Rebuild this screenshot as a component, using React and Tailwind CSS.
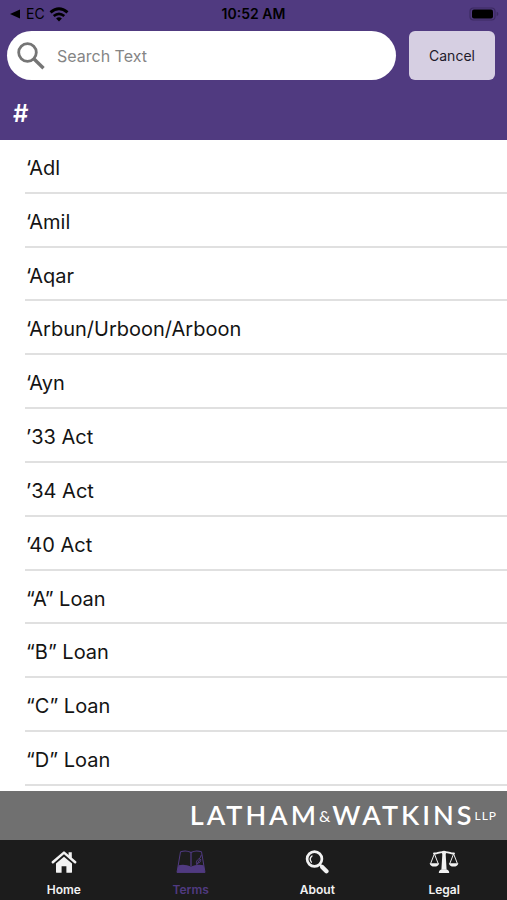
const TERMS = [
  "‘Adl",
  "‘Amil",
  "‘Aqar",
  "‘Arbun/Urboon/Arboon",
  "‘Ayn",
  "’33 Act",
  "’34 Act",
  "’40 Act",
  "“A” Loan",
  "“B” Loan",
  "“C” Loan",
  "“D” Loan",
];

const HomeIcon = () => (
  <svg viewBox="0 0 26 24" className="h-6 w-[26px]" fill="currentColor" aria-hidden="true">
    <path d="M5 13.600 13 6.700l8 6.900v8.300q0 .9-.9.9h-4.700v-6.600h-4.800v6.600H5.900q-.9 0-.9-.9z" />
    <path
      d="M1.800 12.200 13 2.600l11.200 9.600"
      fill="none"
      stroke="currentColor"
      strokeWidth="2.500"
      strokeLinecap="round"
      strokeLinejoin="round"
    />
    <path d="M17.600 2.200h3.200v6l-3.200-2.700z" />
  </svg>
);

const BookIcon = () => (
  <svg viewBox="0 0 30 24" className="h-6 w-[30px]" fill="none" stroke="currentColor" aria-hidden="true">
    <path d="M4.500 1.800 1 22.400h28L25.500 1.800" strokeWidth="1" />
    <path d="M4.500 1.800c3-1 7.500-1 10.500.6 3-1.600 7.500-1.600 10.500-.6" strokeWidth="1.100" />
    <path d="M15 2.400v13.600" strokeWidth="1.300" />
    <path d="M2.400 15.200q6.800-1.400 12.600 1.400 5.800-2.800 12.600-1.400L29 22.400H1z" fill="currentColor" stroke="none" />
    <path d="M21 14.800c-1.800-2.800.4-5.400 3-6.600l1.400-3.400M20.800 14.600l3.200-5.400M21.800 13c2.200.2 3.200-1.800 2.800-4" strokeWidth="1" />
  </svg>
);

const LensIcon = () => (
  <svg viewBox="0 0 24 24" className="h-6 w-6" fill="none" stroke="currentColor" aria-hidden="true">
    <circle cx="9.500" cy="9" r="7.400" strokeWidth="2.700" />
    <path d="m14.600 14.400 3 3" strokeWidth="2.600" />
    <path d="m17.400 17.200 4 4" strokeWidth="4.400" strokeLinecap="round" />
    <path d="M6.400 12.200c-1.600-2.200-1.200-4.800.6-6.200" strokeWidth="1.300" strokeLinecap="round" />
  </svg>
);

const ScalesIcon = () => (
  <svg viewBox="0 0 30 24" className="h-6 w-[30px]" fill="none" stroke="currentColor" aria-hidden="true">
    <path d="M5 3.400c3 .8 5-1.800 10-1.200 5-.6 7 2 10 1.200" strokeWidth="1.900" strokeLinecap="round" />
    <path d="M12.800 1.800q2.200-2.200 4.400 0l-.5 3 .9 14.600h-5.200l.9-14.600z" fill="currentColor" stroke="none" />
    <path d="M9.800 23q0-3.200 3.200-3.800h4q3.200.6 3.200 3.800z" fill="currentColor" stroke="none" />
    <path d="M5.400 3.800 1.600 13.600M5.400 3.800l3.800 9.800M24.600 3.800l-3.800 9.800M24.600 3.800l3.800 9.800" strokeWidth="1" />
    <path d="M.600 13.200h9.600q-.8 3.400-4.800 3.400T.600 13.200zM19.800 13.200h9.600q-.8 3.400-4.800 3.400t-4.800-3.400z" fill="currentColor" stroke="none" />
  </svg>
);

const TABS = [
  { name: "Home", Icon: HomeIcon },
  { name: "Terms", Icon: BookIcon, active: true },
  { name: "About", Icon: LensIcon },
  { name: "Legal", Icon: ScalesIcon },
];

const StatusBar = () => (
  <div className="grid h-7 grid-cols-3 items-center px-2 text-sm text-black">
    <div className="flex items-center gap-1">
      <svg viewBox="0 0 10 10" className="ml-0.5 h-2.5 w-2.5" fill="currentColor" aria-hidden="true">
        <path d="M10 .5v9L0 5z" />
      </svg>
      <span className="ml-0.5">EC</span>
      <svg viewBox="0 0 20 15" className="h-[15px] w-5" fill="none" stroke="currentColor" aria-hidden="true">
        <path d="M1.500 5.400q8.500-7.400 17 0" strokeWidth="2.900" />
        <path d="M4.700 9q5.300-4.400 10.600 0" strokeWidth="2.600" />
        <path d="M10 14.400 7.100 11.400q2.900-2.300 5.800 0z" fill="currentColor" stroke="none" />
      </svg>
    </div>
    <div className="text-center font-semibold whitespace-nowrap">10:52 AM</div>
    <svg viewBox="0 0 30 14" className="h-3.5 w-[30px] justify-self-end" fill="none" aria-hidden="true">
      <rect x="1" y="1" width="25" height="12" rx="3.500" stroke="#3c2b62" strokeWidth="1.200" />
      <rect x="3" y="2.500" width="21" height="9" rx="2" fill="#000" />
      <path d="M27.600 4.800q1.800.6 1.800 2.200t-1.800 2.200z" fill="#3c2b62" />
    </svg>
  </div>
);

const SearchBar = () => (
  <form className="flex gap-[13px] pt-[3px] pr-3 pl-[7px]" onSubmit={(e) => e.preventDefault()}>
    <label className="flex h-[49px] min-w-0 flex-1 items-center gap-3 rounded-full bg-white pr-4 pl-[10px]">
      <svg viewBox="0 0 28 28" className="h-7 w-7 shrink-0" fill="none" stroke="#757575" strokeWidth="2.800" aria-hidden="true">
        <circle cx="10.500" cy="10.500" r="8.800" />
        <path d="m16.500 16.500 10 9.700" strokeWidth="3.400" />
      </svg>
      <input
        type="text"
        aria-label="Search Text"
        placeholder="Search Text"
        className="min-w-0 flex-1 bg-transparent text-base text-black outline-none placeholder:text-[#858585]"
      />
    </label>
    <button type="button" className="h-[49px] w-[86px] rounded-md bg-[#d6cfe2] text-sm text-[#1f1a2b]">
      Cancel
    </button>
  </form>
);

const App = () => {
  return (
    <div className="flex min-h-screen flex-col bg-white font-['Inter',sans-serif]">
      <header className="bg-[#503a80] text-white">
        <StatusBar />
        <SearchBar />
        <h2 className="flex h-[60px] items-center px-[13px] pt-2 text-2xl font-semibold">#</h2>
      </header>

      <ul className="grid flex-1 auto-rows-fr pb-[5px] pl-[25px]">
        {TERMS.map((term) => (
          <li key={term} className="flex min-h-12 items-center border-b-2 border-[#e0e0e0] pt-1 pl-px">
            <a href="#term" className="flex-1 text-xl text-[#141414]">
              {term}
            </a>
          </li>
        ))}
      </ul>

      <div className="flex h-[49px] items-center justify-end bg-[#707070] pr-2.5 font-['Lato',sans-serif] text-white">
        <span className="text-[27px] font-semibold tracking-[3px]">LATHAM</span>
        <span className="text-base">&amp;</span>
        <span className="ml-0.5 text-[27px] font-semibold tracking-[3px]">WATKINS</span>
        <span className="text-xs tracking-[1px]">LLP</span>
      </div>

      <nav className="grid h-[60px] grid-cols-4 bg-[#1c1c1c]">
        {TABS.map(({ name, Icon, active }) => (
          <a
            key={name}
            href={`#${name.toLowerCase()}`}
            className={`flex flex-col items-center gap-2 pt-2.5 pl-px text-xs font-semibold ${
              active ? "text-[#503a80]" : "text-[#f2f2f2]"
            }`}
          >
            <Icon />
            <span>{name}</span>
          </a>
        ))}
      </nav>
    </div>
  );
};

export default App;
